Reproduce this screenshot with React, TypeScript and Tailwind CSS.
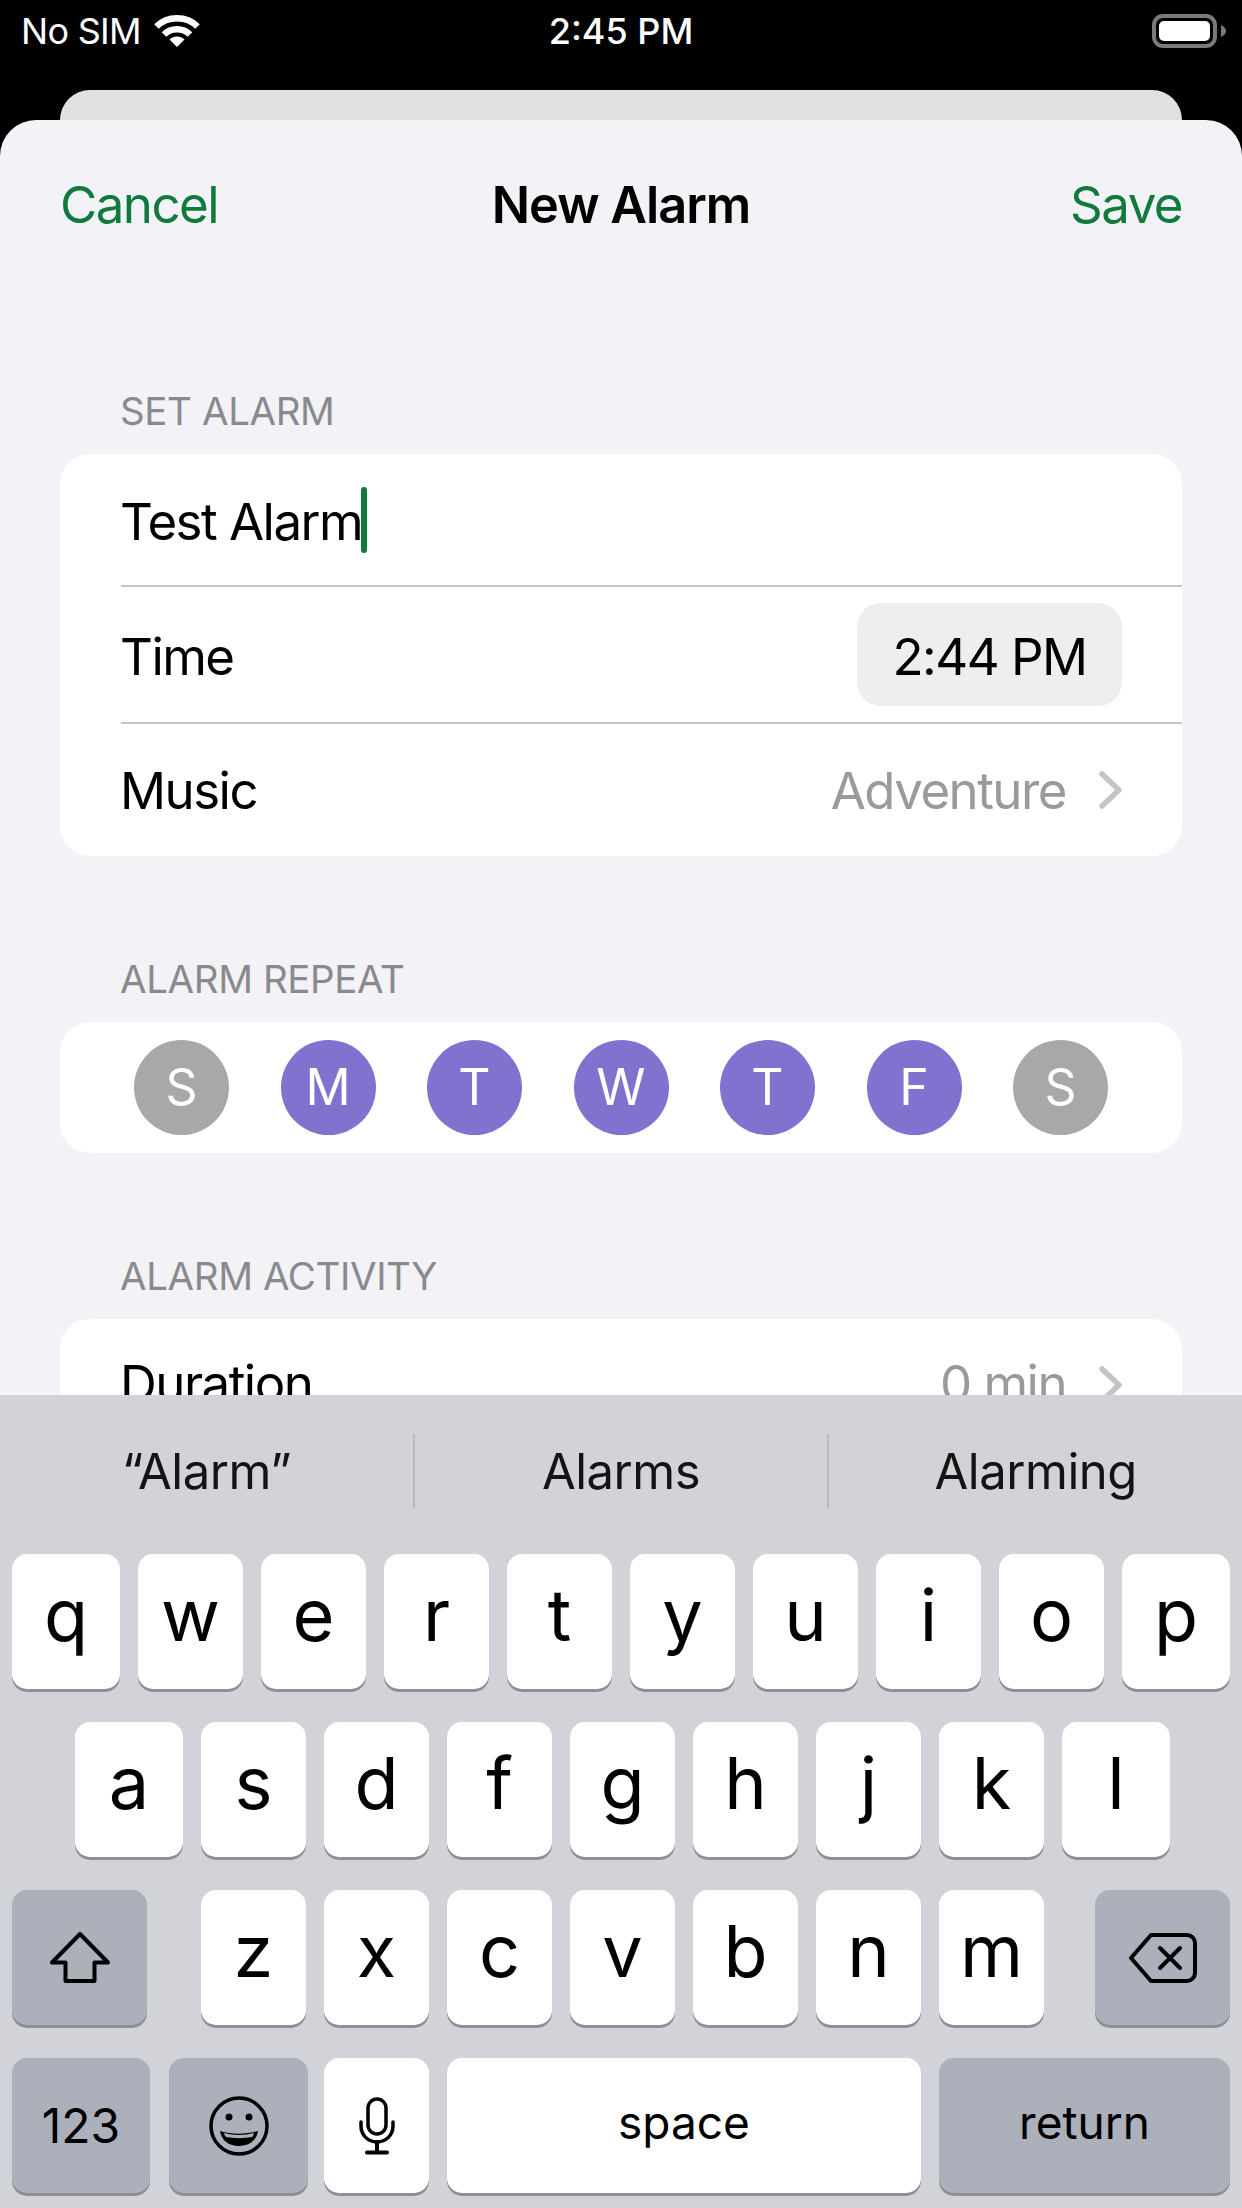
import React from "react";

const FONT = { fontFamily: "Inter, 'Liberation Sans', sans-serif" };

const ROW1 = ["q", "w", "e", "r", "t", "y", "u", "i", "o", "p"];
const ROW2 = ["a", "s", "d", "f", "g", "h", "j", "k", "l"];
const ROW3 = ["z", "x", "c", "v", "b", "n", "m"];
const DAYS = [
  { label: "S", on: false },
  { label: "M", on: true },
  { label: "T", on: true },
  { label: "W", on: true },
  { label: "T", on: true },
  { label: "F", on: true },
  { label: "S", on: false },
];

function Chevron() {
  return (
    <svg width="26" height="38" viewBox="0 0 26 38" className="shrink-0">
      <path d="M4 3l17 16L4 35" fill="none" stroke="#c4c4c7" strokeWidth="5.5" strokeLinecap="round" strokeLinejoin="round" />
    </svg>
  );
}

function Wifi() {
  return (
    <svg width="46" height="34" viewBox="0 0 46 34" fill="none" stroke="#fff" strokeWidth="6.5">
      <path d="M2.500 12.500C13.500 1.500 32.500 1.500 43.500 12.500" />
      <path d="M10 20.500C17 13.500 29 13.500 36 20.500" />
      <path d="M23 33l-7.500-7.500c4-4 11-4 15 0z" fill="#fff" stroke="none" />
    </svg>
  );
}

function Battery() {
  return (
    <svg width="74" height="34" viewBox="0 0 74 34">
      <rect x="2" y="2" width="61" height="30" rx="9" fill="none" stroke="#7a7a7a" strokeWidth="4" />
      <rect x="7" y="7" width="51" height="20" rx="5" fill="#fff" />
      <path d="M69 11c3 1.500 5 3.500 5 6s-2 4.500-5 6z" fill="#7a7a7a" />
    </svg>
  );
}

function ShiftIcon() {
  return (
    <svg width="60" height="52" viewBox="0 0 60 52" fill="none" stroke="#000" strokeWidth="4" strokeLinejoin="round">
      <path d="M30 2L2 30.500h13.500V49h29V30.500H58z" />
    </svg>
  );
}

function DeleteIcon() {
  return (
    <svg width="68" height="50" viewBox="0 0 68 50" fill="none" stroke="#000" strokeWidth="4" strokeLinecap="round" strokeLinejoin="round">
      <path d="M22 2h36a8 8 0 0 1 8 8v30a8 8 0 0 1-8 8H22L2 25z" />
      <path d="M31 15l20 20M51 15L31 35" />
    </svg>
  );
}

function EmojiIcon() {
  return (
    <svg width="60" height="60" viewBox="0 0 60 60">
      <circle cx="30" cy="30" r="28" fill="none" stroke="#000" strokeWidth="3.500" />
      <circle cx="20" cy="21" r="3.500" fill="#000" />
      <circle cx="40" cy="21" r="3.500" fill="#000" />
      <path d="M11 35c12 3.500 26 3.500 38 0-1.500 10-9.500 15-19 15S12.500 45 11 35z" fill="#000" />
      <path d="M15 37c10 2.500 20 2.500 30 0-.5 2-1 3-2 4-9 1.500-17 1.500-26 0-1-1-1.500-2-2-4z" fill="#abb0bb" />
    </svg>
  );
}

function MicIcon() {
  return (
    <svg width="36" height="58" viewBox="0 0 36 58" fill="none" stroke="#000" strokeWidth="3.500" strokeLinecap="round">
      <rect x="9" y="2" width="18" height="35" rx="9" />
      <path d="M2 25v4c0 9 7 16 16 16s16-7 16-16v-4" strokeWidth="3.500" />
      <path d="M18 45v10M8 55.500h20" strokeWidth="4" />
    </svg>
  );
}

function SectionLabel({ children }: { children: React.ReactNode }) {
  return <div className="h-[44px] pl-[120px] text-[38.5px] leading-[44px] tracking-[-0.01em] text-[#8a8a8e] mb-[21px]">{children}</div>;
}

function Key({ label, className = "" }: { label: string; className?: string }) {
  return (
    <div className={`h-[135px] w-[105px] shrink-0 rounded-[15px] bg-white shadow-[0_3px_0_#8e8f94] flex items-center justify-center text-[72px] leading-none text-black pb-[14px] ${className}`}>
      {label}
    </div>
  );
}

function FnKey({ children, className = "" }: { children: React.ReactNode; className?: string }) {
  return (
    <div className={`h-[135px] shrink-0 rounded-[15px] bg-[#abb0bb] shadow-[0_3px_0_#8e8f94] flex items-center justify-center text-black ${className}`}>
      {children}
    </div>
  );
}

export default function App() {
  return (
    <div className="h-[2208px] w-[1242px] bg-black overflow-hidden flex flex-col" style={FONT}>
      {/* status bar */}
      <div className="h-[90px] shrink-0 px-[21px] pb-[28px] flex items-center text-white relative">
        <span className="text-[36px] tracking-[-0.02em]">No SIM</span>
        <span className="ml-[13px]"><Wifi /></span>
        <span className="absolute left-0 right-0 top-[9px] text-center text-[36px] leading-[44px] font-medium">2:45 PM</span>
        <span className="ml-auto -mr-[5px]"><Battery /></span>
      </div>
      <div className="h-[30px] shrink-0 mx-[60px] rounded-t-[30px] bg-[#e0e0e0]" />

      {/* sheet */}
      <div className="flex-1 min-h-0 rounded-t-[36px] bg-[#f2f2f7] overflow-hidden flex flex-col">
        <div className="flex-1 min-h-0 overflow-hidden">
          <div className="h-[170px] px-[60px] flex items-center justify-between relative">
            <span className="text-[51px] tracking-[-0.03em] text-[#0f7a3b]">Cancel</span>
            <span className="absolute left-0 right-0 text-center text-[50.500px] font-semibold tracking-[-0.02em] text-black">New Alarm</span>
            <span className="text-[51px] tracking-[-0.03em] text-[#0f7a3b]">Save</span>
          </div>

          <div className="pt-[99px]">
            <SectionLabel>SET ALARM</SectionLabel>
            <div className="mx-[60px] rounded-[30px] bg-white h-[402px] flex flex-col text-[51px] tracking-[-0.03em] text-black">
              <div className="h-[131px] shrink-0 ml-[61px] flex items-center">
                <span className="-ml-px pt-[5px]">Test Alarm</span>
                <span className="w-[6px] h-[66px] rounded-full bg-[#0f7a3b] -ml-px" />
              </div>
              <div className="h-[139px] shrink-0 ml-[61px] pr-[60px] border-y-2 border-[#c6c6c8] flex items-center justify-between">
                <span className="-ml-px pt-[5px]">Time</span>
                <span className="w-[265px] h-[103px] pt-[5px] rounded-[24px] bg-[#eeeeef] flex items-center justify-center">2:44 PM</span>
              </div>
              <div className="flex-1 ml-[61px] pr-[58px] flex items-center justify-between">
                <span className="-ml-px pt-[3px]">Music</span>
                <span className="flex items-center gap-[32px] text-[#99999e]"><span className="pt-[3px]">Adventure</span><Chevron /></span>
              </div>
            </div>
          </div>

          <div className="pt-[101px]">
            <SectionLabel>ALARM REPEAT</SectionLabel>
            <div className="mx-[60px] h-[131px] rounded-[30px] bg-white px-[74px] flex items-center justify-between">
              {DAYS.map((d, i) => (
                <div key={i} className={`w-[95px] h-[95px] rounded-full flex items-center justify-center text-white text-[50px] ${d.on ? "bg-[#8172d0]" : "bg-[#a8a8a8]"}`}>
                  {d.label}
                </div>
              ))}
            </div>
          </div>

          <div className="pt-[101px]">
            <SectionLabel>ALARM ACTIVITY</SectionLabel>
            <div className="mx-[60px] h-[131px] rounded-[30px] bg-white pl-[60px] pr-[58px] flex items-center justify-between text-[51px] tracking-[-0.03em] text-black">
              <span>Duration</span>
              <span className="flex items-center gap-[32px] text-[#99999e]">0 min<Chevron /></span>
            </div>
          </div>
        </div>

        {/* keyboard */}
        <div className="h-[813px] shrink-0 bg-[#d1d3d9]">
          <div className="h-[159px] flex items-start pt-[39px]">
            <div className="flex-1 h-[74px] pt-[2px] flex items-center justify-center text-[49px] tracking-[-0.01em] text-[#141414]">“Alarm”</div>
            <div className="w-[2px] h-[74px] bg-[#b9bbc0]" />
            <div className="flex-1 h-[74px] pt-[2px] flex items-center justify-center text-[49px] tracking-[-0.01em] text-[#141414]">Alarms</div>
            <div className="w-[2px] h-[74px] bg-[#b9bbc0]" />
            <div className="flex-1 h-[74px] pt-[2px] flex items-center justify-center text-[49px] tracking-[-0.01em] text-[#141414]">Alarming</div>
          </div>
          <div className="flex flex-col gap-[33px] px-[12px]">
            <div className="flex gap-[18px]">
              {ROW1.map((k, i) => (
                <Key key={k} label={k} className={i === 0 || i === 9 ? "w-[108px]" : ""} />
              ))}
            </div>
            <div className="flex gap-[18px] pl-[63px]">
              {ROW2.map((k, i) => (
                <Key key={k} label={k} className={i === 0 || i === 8 ? "w-[108px]" : ""} />
              ))}
            </div>
            <div className="flex">
              <FnKey className="w-[135px]"><ShiftIcon /></FnKey>
              <div className="flex gap-[18px] ml-[54px]">
                {ROW3.map((k) => (
                  <Key key={k} label={k} />
                ))}
              </div>
              <FnKey className="w-[135px] ml-auto"><DeleteIcon /></FnKey>
            </div>
            <div className="flex gap-[18px] text-[46px]">
              <FnKey className="w-[138px] text-[48px]">123</FnKey>
              <FnKey className="w-[139px] ml-px -mr-[2px]"><EmojiIcon /></FnKey>
              <div className="h-[135px] w-[105px] shrink-0 rounded-[15px] bg-white shadow-[0_3px_0_#8e8f94] flex items-center justify-center"><MicIcon /></div>
              <div className="h-[135px] w-[474px] shrink-0 rounded-[15px] pb-[6px] bg-white shadow-[0_3px_0_#8e8f94] flex items-center justify-center text-black">space</div>
              <FnKey className="flex-1 pb-[6px]">return</FnKey>
            </div>
          </div>
        </div>
      </div>
    </div>
  );
}
